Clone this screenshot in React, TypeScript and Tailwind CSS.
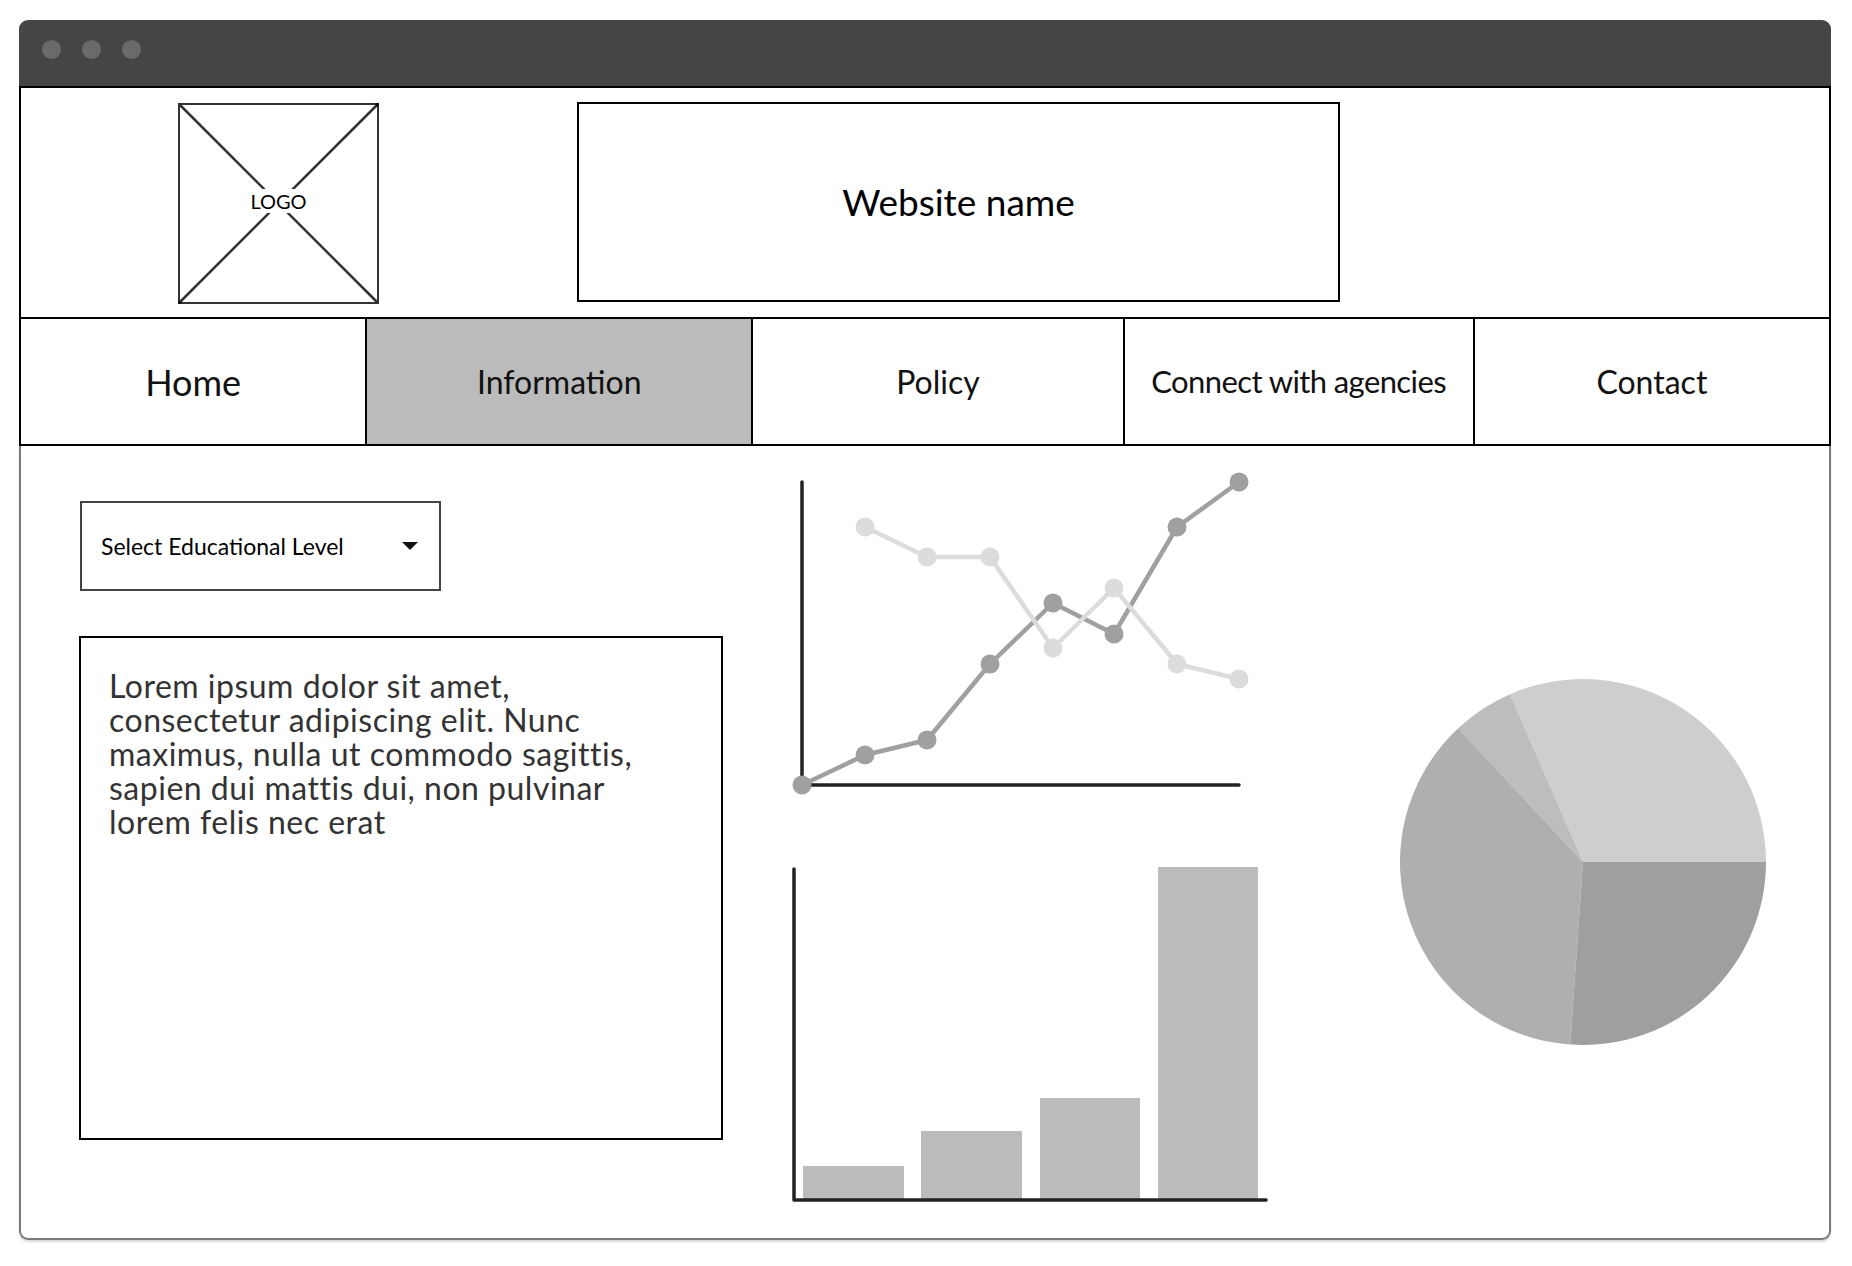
import React from "react";

const font = { fontFamily: "Lato, 'Open Sans', sans-serif" };

const navItems = [
  { label: "Home", w: "w-[345px]", active: false, cls: "text-[36px]" },
  { label: "Information", w: "w-[387px]", active: true, cls: "text-[32px]" },
  { label: "Policy", w: "w-[372px]", active: false, cls: "text-[32px]" },
  { label: "Connect with agencies", w: "w-[351px]", active: false, cls: "text-[31px] tracking-[-0.6px]" },
  { label: "Contact", w: "w-[357px]", active: false, cls: "text-[32px]" },
];

const dark = [
  [803, 784],
  [866, 754],
  [928, 739],
  [991, 663],
  [1054, 602],
  [1115, 633],
  [1178, 526],
  [1240, 481],
];

const light = [
  [866, 526],
  [928, 556],
  [991, 556],
  [1054, 647],
  [1115, 587],
  [1178, 663],
  [1240, 678],
];

const bars = [
  { x: 804, w: 101, top: 1165 },
  { x: 922, w: 101, top: 1130 },
  { x: 1041, w: 100, top: 1097 },
  { x: 1159, w: 100, top: 866 },
];

const toPoints = (pts: number[][]) => pts.map((p) => p.join(",")).join(" ");

function LogoBox() {
  return (
    <div className="relative w-[201px] h-[201px] mt-[1px] flex items-center justify-center">
      <svg className="absolute inset-0" width="201" height="201" viewBox="0 0 201 201">
        <rect x="1" y="1" width="199" height="199" fill="none" stroke="#333" strokeWidth="2" />
        <line x1="1" y1="1" x2="200" y2="200" stroke="#333" strokeWidth="2.5" />
        <line x1="200" y1="1" x2="1" y2="200" stroke="#333" strokeWidth="2.5" />
        <circle cx="200" cy="1" r="2.5" fill="#111" />
        <circle cx="1" cy="200" r="2.5" fill="#111" />
      </svg>
      <span className="relative mb-[5px] bg-white px-[3px] py-[2px] text-[20px] leading-none text-black">LOGO</span>
    </div>
  );
}

function LineChart() {
  return (
    <svg width="480" height="340" viewBox="780 460 480 340">
      <path d="M803 481 V784 H1240" fill="none" stroke="#222" strokeWidth="3.5" strokeLinecap="round" strokeLinejoin="round" />
      <polyline points={toPoints(dark)} fill="none" stroke="#a0a0a0" strokeWidth="4.5" strokeLinejoin="round" />
      {dark.map(([x, y], i) => (
        <circle key={"d" + i} cx={x} cy={y} r="9.5" fill="#a0a0a0" />
      ))}
      <polyline points={toPoints(light)} fill="none" stroke="#dcdcdc" strokeWidth="4.5" strokeLinejoin="round" />
      {light.map(([x, y], i) => (
        <circle key={"l" + i} cx={x} cy={y} r="9.5" fill="#dcdcdc" />
      ))}
    </svg>
  );
}

function BarChart() {
  return (
    <svg width="500" height="360" viewBox="780 850 500 360">
      {bars.map((b, i) => (
        <rect key={i} x={b.x} y={b.top} width={b.w} height={1199 - b.top} fill="#bbbbbb" />
      ))}
      <path d="M795 868 V1199 H1267" fill="none" stroke="#222" strokeWidth="3.5" strokeLinecap="round" strokeLinejoin="round" />
    </svg>
  );
}

function PieChart() {
  return (
    <svg width="366" height="366" viewBox="0 0 366 366">
      <path d="M183 183 L366 183 A183 183 0 0 0 110.04 15.17 Z" fill="#cecece" />
      <path d="M183 183 L110.04 15.17 A183 183 0 0 0 58.2 49.15 Z" fill="#bdbdbd" />
      <path d="M183 183 L58.2 49.15 A183 183 0 0 0 170.23 365.55 Z" fill="#afafaf" />
      <path d="M183 183 L170.23 365.55 A183 183 0 0 0 366 183 Z" fill="#9f9f9f" />
    </svg>
  );
}

export default function App() {
  return (
    <div className="w-[1852px] h-[1266px] bg-white overflow-hidden" style={font}>
      <div className="ml-[19px] pt-[20px] w-[1812px] h-[1240px] flex flex-col">
        {/* browser bar */}
        <div className="h-[66px] shrink-0 bg-[#454545] rounded-t-[9px] flex items-start pt-[20px] pl-[23px] gap-[21px]">
          <div className="w-[19px] h-[19px] rounded-full bg-[#6a6a6a]" />
          <div className="w-[19px] h-[19px] rounded-full bg-[#6a6a6a]" />
          <div className="w-[19px] h-[19px] rounded-full bg-[#6a6a6a]" />
        </div>

        {/* header */}
        <div className="h-[231px] shrink-0 border-x-2 border-t-2 border-black flex items-start pt-[14px] pl-[157px] gap-[198px]">
          <LogoBox />
          <div className="w-[763px] h-[200px] border-2 border-black flex items-center justify-center">
            <span className="text-[37px] text-black">Website name</span>
          </div>
        </div>

        {/* nav */}
        <div className="h-[129px] shrink-0 border-2 border-black flex">
          {navItems.map((item, i) => (
            <div
              key={item.label}
              className={`${item.w} ${i > 0 ? "border-l-2 border-black" : ""} ${
                item.active ? "bg-[#bbbbbb]" : "bg-white"
              } flex items-center justify-center text-[#111] ${item.cls}`}
            >
              {item.label}
            </div>
          ))}
        </div>

        {/* content */}
        <div className="flex-1 border-x-2 border-b-2 border-[#7a7a7a] rounded-b-[9px] shadow-[0_2px_2px_rgba(0,0,0,0.15)] flex items-start">
          <div className="ml-[59px] mt-[55px] flex flex-col">
            <div className="w-[361px] h-[90px] border-2 border-[#444] flex items-center justify-between pl-[19px] pr-[21px]">
              <span className="text-[23px] text-black">Select Educational Level</span>
              <svg width="16" height="8" viewBox="0 0 16 8">
                <polygon points="0,0 16,0 8,8" fill="#111" />
              </svg>
            </div>
            <div className="mt-[45px] -ml-[1px] w-[644px] h-[504px] border-2 border-black pl-[28px] pt-[31px]">
              <p className="text-[32px] leading-[34px] tracking-[0.5px] text-[#333]">
                <span className="block">Lorem ipsum dolor sit amet,</span>
                <span className="block">consectetur adipiscing elit. Nunc</span>
                <span className="block">maximus, nulla ut commodo sagittis,</span>
                <span className="block">sapien dui mattis dui, non pulvinar</span>
                <span className="block">lorem felis nec erat</span>
              </p>
            </div>
          </div>

          <div className="ml-[56px] mt-[15px] flex flex-col">
            <LineChart />
            <div className="mt-[50px]">
              <BarChart />
            </div>
          </div>

          <div className="ml-[121px] mt-[233px]">
            <PieChart />
          </div>
        </div>
      </div>
    </div>
  );
}
